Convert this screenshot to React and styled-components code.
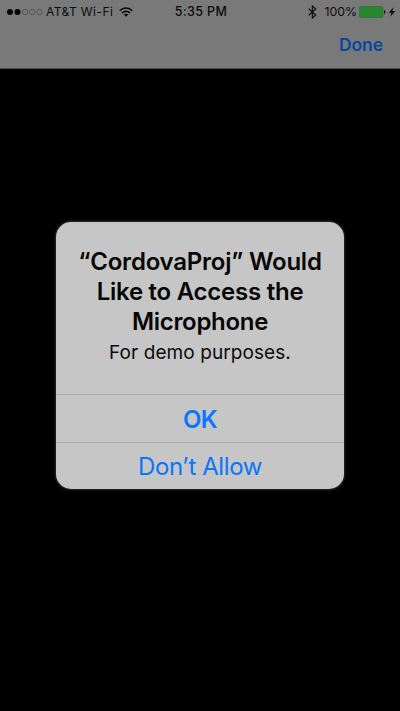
import React from 'react';
import styled, { createGlobalStyle } from 'styled-components';

const GlobalStyle = createGlobalStyle`
  * { box-sizing: border-box; }
  html, body { margin: 0; background: #000; }
  body { font-family: Inter, "Liberation Sans", sans-serif; overflow: hidden; }
`;

const Screen = styled.div`
  width: 400px;
  height: 711px;
  display: flex;
  flex-direction: column;
  background: #000;
`;

const Header = styled.header`
  height: 69px;
  flex: none;
  background: #797979;
  border-bottom: 1px solid #505050;
`;

const StatusBar = styled.div`
  height: 23px;
  display: grid;
  grid-template-columns: 1fr auto 1fr;
  align-items: center;
  padding: 0 4px 0 7px;
  font-size: 12px;
  line-height: 22px;
  color: #0c0c0c;
  white-space: nowrap;
`;

const StatusGroup = styled.div`
  display: flex;
  align-items: center;
  height: 22px;
  justify-content: ${(p) => (p.$end ? 'flex-end' : 'flex-start')};
  svg { flex: none; display: block; }
`;

const Carrier = styled.span`
  margin: 0 6px 0 3px;
  letter-spacing: 0.42px;
`;

const Clock = styled.span`
  height: 22px;
  font-weight: 500;
  font-size: 12.5px;
  letter-spacing: 0.35px;
  margin-right: 1px;
`;

const BatteryLevel = styled.span`
  margin: 0 2px 0 7px;
  font-size: 12.3px;
`;

const NavBar = styled.nav`
  height: 44px;
  display: flex;
  justify-content: flex-end;
  align-items: center;
  padding-right: 17px;
`;

const DoneButton = styled.button`
  border: 0;
  padding: 0;
  background: none;
  font: 600 17.4px/22px Inter, sans-serif;
  color: #0648a0;
  height: 26px;
`;

const Stage = styled.main`
  flex: 1;
  display: flex;
  justify-content: center;
  align-items: flex-start;
  padding-top: 153px;
`;

const Alert = styled.section`
  width: 288px;
  height: 267px;
  border-radius: 15px;
  background: #c6c6c6;
  box-shadow: 0 0 0 1.5px #1c1c1c;
  overflow: hidden;
  display: flex;
  flex-direction: column;
  text-align: center;
  white-space: nowrap;
`;

const AlertBody = styled.div`
  height: 172px;
  padding-top: 25px;
`;

const Title = styled.h1`
  margin: 0;
  font-size: 24px;
  line-height: 30px;
  font-weight: 600;
  color: #060606;
`;

const TitleLine = styled.span`
  display: block;
  letter-spacing: ${(p) => p.$spacing}px;
`;

const Message = styled.p`
  margin: 3px 0 0;
  font-size: 19px;
  line-height: 26px;
  letter-spacing: 0.08px;
  color: #0b0b0b;
`;

const Action = styled.button`
  height: ${(p) => (p.$strong ? 48 : 47)}px;
  border: 0;
  border-top: 1px solid #aaa;
  padding: ${(p) => (p.$strong ? 2 : 1)}px 0 0;
  background: none;
  font: ${(p) => (p.$strong ? 600 : 400)} 24px/46px Inter, sans-serif;
  letter-spacing: ${(p) => (p.$strong ? -0.6 : -0.4)}px;
  color: #0a76fb;
`;

const SignalDots = () => (
  <svg width="36" height="8" viewBox="0 0 36 8">
    {[3, 10.5, 18, 25.2, 32.5].map((cx, i) => (
      <circle key={cx} cx={cx} cy="4" r={i < 2 ? 3 : 2.7}
        fill={i < 2 ? '#050505' : 'none'} stroke={i < 2 ? 'none' : '#414141'} strokeWidth=".6" />
    ))}
  </svg>
);

const WifiIcon = () => (
  <svg width="14" height="10" viewBox="0 0 14 10" fill="none" stroke="#080808" strokeWidth="1.6">
    <path d="M.8 3.7C4.3.1 9.7.1 13.2 3.7" />
    <path d="M3 6C5.3 3.6 8.7 3.6 11 6" />
    <path d="M7 9.8 4.8 7.5C6 6.4 8 6.4 9.2 7.5Z" fill="#080808" stroke="none" />
  </svg>
);

const BluetoothIcon = () => (
  <svg width="9" height="14" viewBox="0 0 9 14" fill="none" stroke="#111" strokeWidth="1.25">
    <path d="M.7 3.8 7.7 10 4.4 13V1L7.7 4 .7 10.2" />
  </svg>
);

const BatteryIcon = () => (
  <svg width="29" height="12" viewBox="0 0 29 12">
    <rect x=".5" y=".5" width="23.5" height="11" rx="1.5" fill="#25882f" stroke="#3e6b42" strokeWidth=".8" />
    <path d="M25 4C26.7 4.3 26.7 7.7 25 8Z" fill="#111" />
  </svg>
);

const BoltIcon = () => (
  <svg width="8" height="10" viewBox="0 0 8 10">
    <path d="M5.3.3.8 5.7H3.5L2.4 9.7 7.2 4.1H4.3Z" fill="#080808" />
  </svg>
);

export default function App() {
  return (
    <Screen>
      <GlobalStyle />
      <Header>
        <StatusBar>
          <StatusGroup>
            <SignalDots />
            <Carrier>AT&amp;T Wi-Fi</Carrier>
            <WifiIcon />
          </StatusGroup>
          <Clock>5:35 PM</Clock>
          <StatusGroup $end>
            <BluetoothIcon />
            <BatteryLevel>100%</BatteryLevel>
            <BatteryIcon />
            <BoltIcon />
          </StatusGroup>
        </StatusBar>
        <NavBar>
          <DoneButton>Done</DoneButton>
        </NavBar>
      </Header>
      <Stage>
        <Alert role="alertdialog" aria-labelledby="alert-title">
          <AlertBody>
            <Title id="alert-title">
              <TitleLine $spacing={-0.22}>“CordovaProj” Would</TitleLine>
              <TitleLine $spacing={-0.25}>Like to Access the</TitleLine>
              <TitleLine $spacing={-0.3}>Microphone</TitleLine>
            </Title>
            <Message>For demo purposes.</Message>
          </AlertBody>
          <Action $strong>OK</Action>
          <Action>Don’t Allow</Action>
        </Alert>
      </Stage>
    </Screen>
  );
}
